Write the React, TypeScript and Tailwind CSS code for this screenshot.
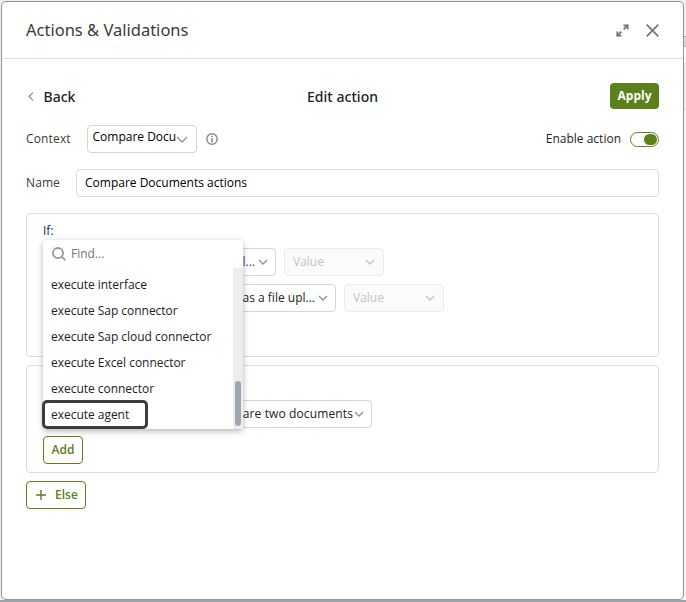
import type { ReactNode } from "react";

const options = [
  "execute interface",
  "execute Sap connector",
  "execute Sap cloud connector",
  "execute Excel connector",
  "execute connector",
  "execute agent",
];

function Chevron({ className = "" }: { className?: string }) {
  return (
    <svg width="10" height="6" viewBox="0 0 10 6" fill="none" className={`shrink-0 ${className}`}>
      <path d="M1 1L5 5L9 1" stroke="currentColor" strokeWidth="1.3" />
    </svg>
  );
}

function Select({ className = "", children }: { className?: string; children: ReactNode }) {
  return (
    <div className={`flex h-7 items-center justify-end whitespace-nowrap rounded border border-[#d5d5d5] bg-white pr-[7px] ${className}`}>
      {children}
      <Chevron className="ml-[3px] text-[#909090]" />
    </div>
  );
}

function ValueSelect() {
  return (
    <div className="flex h-7 w-[100px] items-center justify-between rounded border border-[#ececec] bg-[#fbfbfb] pl-2 pr-2 text-[#c4c4c4]">
      Value
      <Chevron />
    </div>
  );
}

function ActionMenu() {
  return (
    <div className="absolute left-4 top-[26px] h-[189px] w-[200px] rounded bg-white shadow-[0_2px_6px_rgba(0,0,0,0.3)]">
      <div className="flex h-7 items-center pl-[9px] text-[#757575]">
        <svg width="14" height="14" viewBox="0 0 14 14" fill="none" stroke="#999" strokeWidth="1.8">
          <circle cx="6" cy="6" r="5" />
          <path d="M9.6 9.6L13.4 13.4" />
        </svg>
        <span className="ml-[5px]">Find...</span>
      </div>
      <div className="flex h-[161px]">
        <ul className="flex-1 pt-1">
          {options.map((option) => (
            <li key={option} className="h-[26px] whitespace-nowrap pl-2 leading-[26px] -tracking-[0.03px]">
              {option}
            </li>
          ))}
        </ul>
        <div className="w-[10px] bg-[#ebedef] px-[2px] pt-[113px]">
          <div className="h-[45px] rounded-[3px] bg-[#9fa8af]" />
        </div>
      </div>
      <div className="absolute -left-px top-[160px] h-[29px] w-[106px] rounded-[5px] border-3 border-[#3c3d40]" />
    </div>
  );
}

// Sliver of the page that stays visible beside the dialog
function Backdrop() {
  return (
    <div className="w-[2px]">
      <div className="h-9 border-b border-[#9aa0a8] bg-[#eeeff4]" />
      <div className="h-[10px] border-b border-[#b5b8bd] bg-[#d5d7da]" />
      <div className="h-4 bg-white" />
      <div className="h-[47px] border-y border-[#d8d8da] bg-[#ededee]" />
      <div className="h-full bg-[#f6f6f7]" />
    </div>
  );
}

export default function App() {
  return (
    <div className="flex h-[602px] w-[686px] overflow-hidden border-b-2 border-[#9aa5ab] bg-[#eeeff1] pl-px pt-px font-['Open_Sans',sans-serif] text-[12px] text-[#222]">
      <div className="h-[599px] w-[683px] rounded-[5px] border border-[#919396] bg-white">
        <header className="flex h-[57px] items-center justify-between border-b border-[#dcdcdc] pl-6 pr-[24.5px] font-['Noto_Sans',sans-serif]">
          <h1 className="text-[16.5px] text-[#3b3b3b]">Actions &amp; Validations</h1>
          <div className="flex items-center gap-[17px] text-[#757575]">
            <svg width="13" height="13" viewBox="0 0 13 13" fill="none" stroke="currentColor">
              <path d="M7.5 1.3h4.2v4.2M5.5 11.7H1.3V7.5" strokeWidth="1.7" />
              <path d="M12 1L7.7 5.3M1 12L5.3 7.7" strokeWidth="1.9" />
            </svg>
            <svg width="13" height="13" viewBox="0 0 13 13" stroke="currentColor" strokeWidth="1.7">
              <path d="M.7 .7L12.3 12.3M12.3 .7L.7 12.3" />
            </svg>
          </div>
        </header>

        <main className="px-6 pt-6">
          <div className="grid h-[26px] grid-cols-3 items-center font-['Noto_Sans',sans-serif] text-[14px] font-medium">
            <div className="flex items-center">
              <svg width="6" height="9" viewBox="0 0 6 9" fill="none" stroke="#909090" strokeWidth="1.3" className="ml-[2px] mr-[9.5px]">
                <path d="M5 .6L1 4.5L5 8.4" />
              </svg>
              Back
            </div>
            <div className="text-center tracking-[0.05px]">Edit action</div>
            <button className="h-[26px] w-[49px] justify-self-end rounded bg-[#5c801c] font-['Open_Sans',sans-serif] text-[12px] font-bold text-white">
              Apply
            </button>
          </div>

          <div className="mt-4 flex h-7 items-center">
            <span className="w-[61px] tracking-[0.15px] text-[#3b3b3b]">Context</span>
            <div className="flex h-7 w-[110px] items-center rounded border border-[#d5d5d5] pl-[4.5px] text-black">
              <span className="-mt-1 w-[83.5px] whitespace-nowrap">Compare Docu</span>
              <svg width="12" height="7" viewBox="0 0 12 7" fill="none" stroke="#909090" strokeWidth="1.3" className="shrink-0">
                <path d="M1 1L6 6L11 1" />
              </svg>
            </div>
            <svg width="12" height="12" viewBox="0 0 12 12" fill="none" stroke="#8c8c8c" className="ml-[9px]">
              <circle cx="6" cy="6" r="5.2" strokeWidth="1.5" />
              <path d="M6 5.2V9.2M6 2.8V4.2" strokeWidth="1.7" />
            </svg>
            <span className="ml-auto mr-[9px]">Enable action</span>
            <div className="flex h-[15px] w-[29px] items-center justify-end rounded-full border border-[#5c801c] pr-px">
              <div className="h-[11px] w-[13px] rounded-full bg-[#5c801c]" />
            </div>
          </div>

          <div className="mt-4 flex h-7 items-center">
            <span className="w-[50px] tracking-[0.1px] text-[#3b3b3b]">Name</span>
            <div className="flex h-7 flex-1 items-center rounded border border-[#dcdcdc] pl-2 text-black">
              Compare Documents actions
            </div>
          </div>

          <section className="relative mt-4 h-[144px] rounded border border-[#dcdcdc] px-4 pt-2">
            <p className="h-[26px] leading-[18px] text-[#1d2766]">If:</p>
            <div className="flex gap-2">
              <Select className="w-[233px] text-[#3b3b6b]">is equal...</Select>
              <ValueSelect />
            </div>
            <div className="mt-2 flex gap-2">
              <Select className="w-[293px]">has a file upl...</Select>
              <ValueSelect />
            </div>
            <ActionMenu />
          </section>

          <section className="mt-2 h-[108px] rounded border border-[#dcdcdc] px-4 pt-[34px]">
            <Select className="w-[329px]">
              <span className="-mr-[2px] tracking-[0.12px]">Compare two documents</span>
            </Select>
            <button className="mt-2 h-7 w-10 rounded border border-[#5c801c] font-semibold text-[#5c801c]">Add</button>
          </section>

          <button className="mt-2 flex h-7 w-[60px] items-center rounded border border-[#5c801c] pl-[9px] font-semibold text-[#5c801c]">
            <svg width="10" height="10" viewBox="0 0 10 10" stroke="currentColor" strokeWidth="1.4" className="mr-[9px]">
              <path d="M5 0V10M0 5H10" />
            </svg>
            Else
          </button>
        </main>
      </div>
      <Backdrop />
    </div>
  );
}
